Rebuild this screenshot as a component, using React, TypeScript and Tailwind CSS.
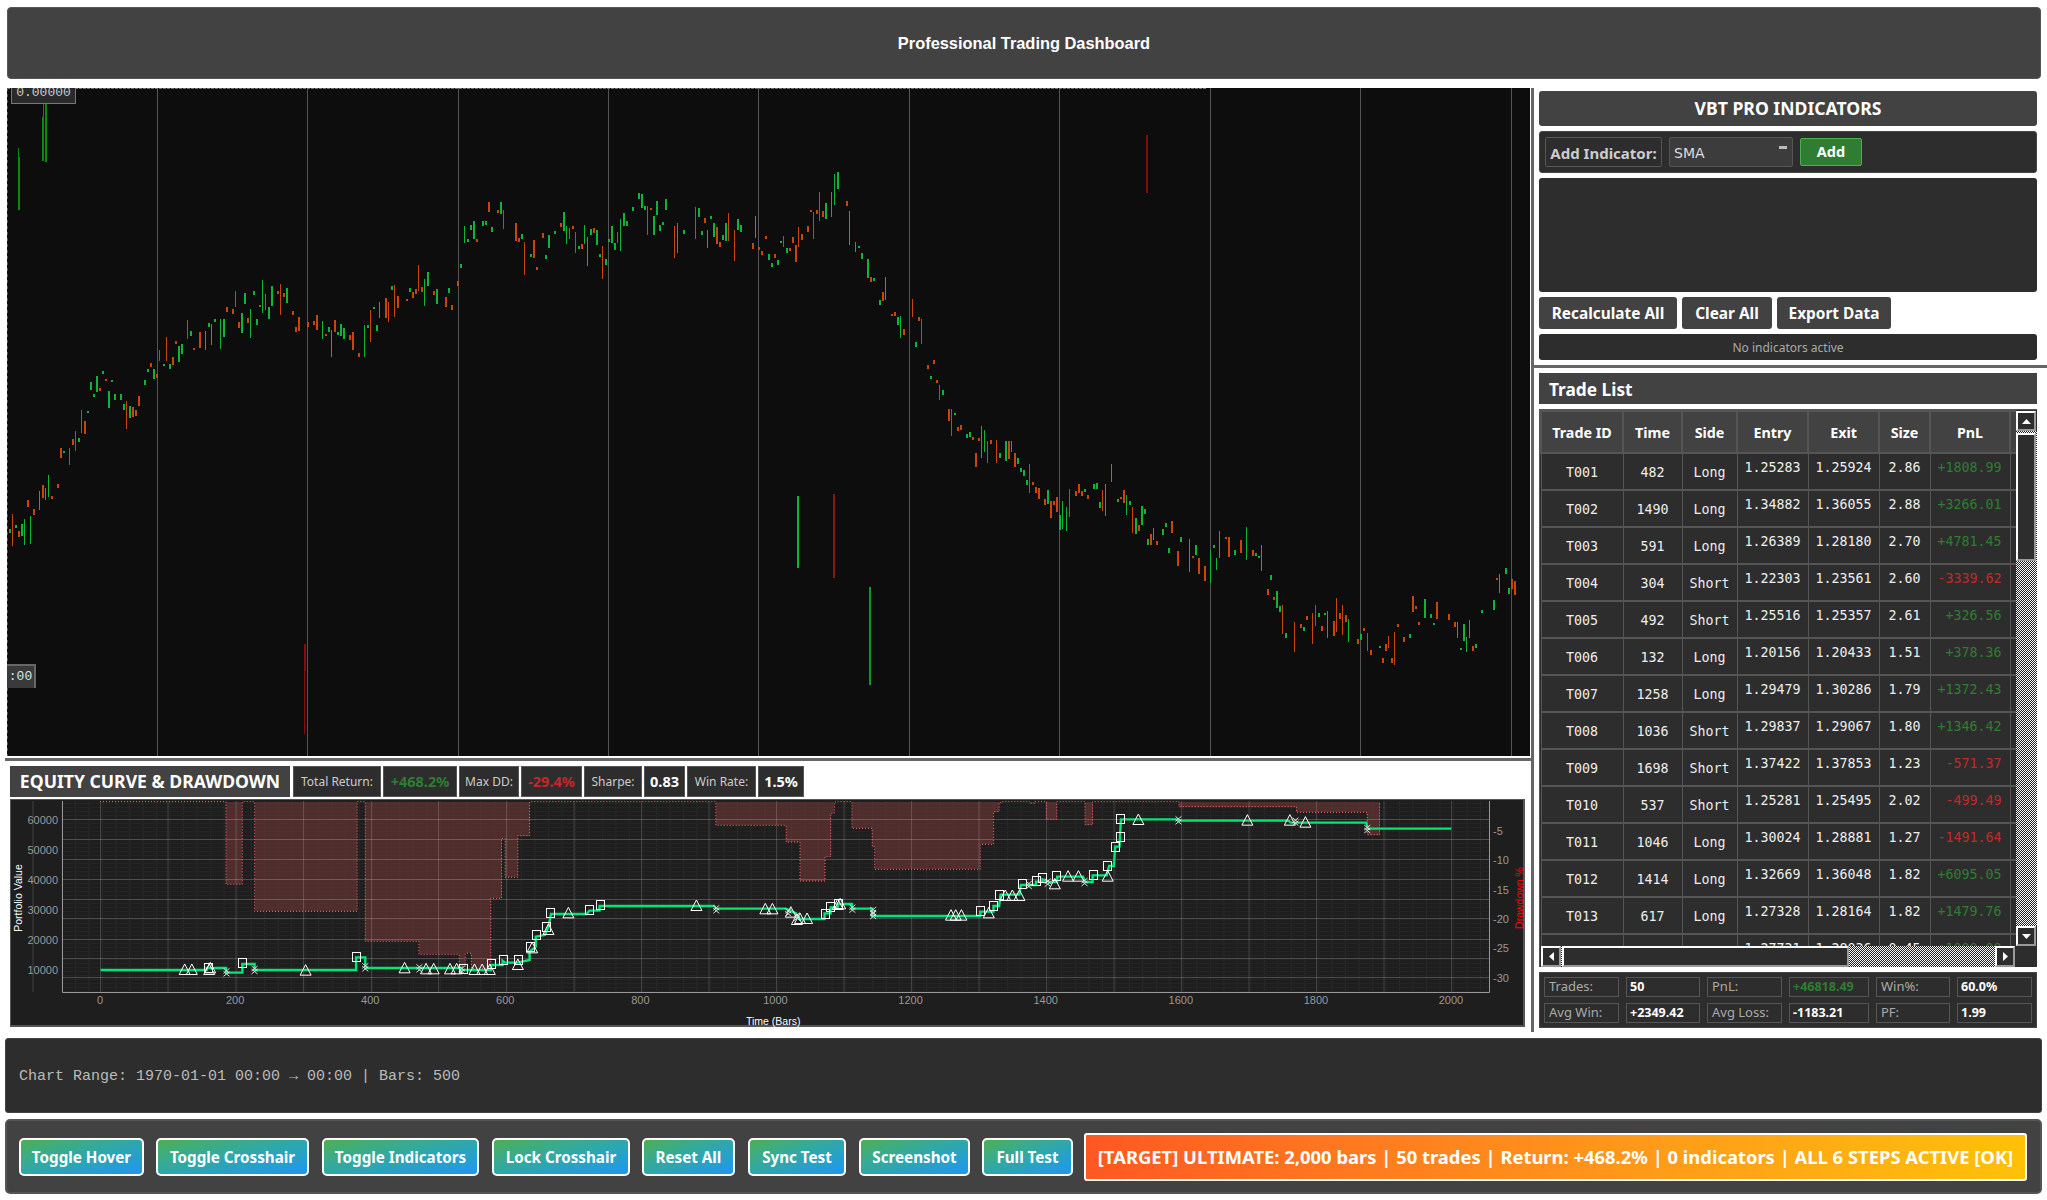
import React from 'react';

interface Trade {
  id: string;
  time: number;
  side: string;
  entry: string;
  exit: string;
  size: string;
  pnl: string;
}

const trades: Trade[] = [
  { id: 'T001', time: 482, side: 'Long', entry: '1.25283', exit: '1.25924', size: '2.86', pnl: '+1808.99' },
  { id: 'T002', time: 1490, side: 'Long', entry: '1.34882', exit: '1.36055', size: '2.88', pnl: '+3266.01' },
  { id: 'T003', time: 591, side: 'Long', entry: '1.26389', exit: '1.28180', size: '2.70', pnl: '+4781.45' },
  { id: 'T004', time: 304, side: 'Short', entry: '1.22303', exit: '1.23561', size: '2.60', pnl: '-3339.62' },
  { id: 'T005', time: 492, side: 'Short', entry: '1.25516', exit: '1.25357', size: '2.61', pnl: '+326.56' },
  { id: 'T006', time: 132, side: 'Long', entry: '1.20156', exit: '1.20433', size: '1.51', pnl: '+378.36' },
  { id: 'T007', time: 1258, side: 'Long', entry: '1.29479', exit: '1.30286', size: '1.79', pnl: '+1372.43' },
  { id: 'T008', time: 1036, side: 'Short', entry: '1.29837', exit: '1.29067', size: '1.80', pnl: '+1346.42' },
  { id: 'T009', time: 1698, side: 'Short', entry: '1.37422', exit: '1.37853', size: '1.23', pnl: '-571.37' },
  { id: 'T010', time: 537, side: 'Short', entry: '1.25281', exit: '1.25495', size: '2.02', pnl: '-499.49' },
  { id: 'T011', time: 1046, side: 'Long', entry: '1.30024', exit: '1.28881', size: '1.27', pnl: '-1491.64' },
  { id: 'T012', time: 1414, side: 'Long', entry: '1.32669', exit: '1.36048', size: '1.82', pnl: '+6095.05' },
  { id: 'T013', time: 617, side: 'Long', entry: '1.27328', exit: '1.28164', size: '1.82', pnl: '+1479.76' },
  { id: 'T014', time: 1122, side: 'Long', entry: '1.27731', exit: '1.28036', size: '0.45', pnl: '+1000.00' },
];

// price path of the candle chart, in page pixels
const pricePath: [number, number][] = [
  [9, 515], [30, 520], [52, 483], [78, 431], [98, 372], [130, 405], [163, 360], [209, 326], [277, 294], [307, 330],
  [355, 342], [405, 285], [454, 295], [467, 233], [496, 215], [535, 255], [561, 222], [607, 248], [640, 203], [679, 228],
  [731, 228], [783, 255], [835, 186], [849, 222], [868, 281], [920, 333], [940, 392], [972, 450], [1005, 457], [1038, 483],
  [1051, 516], [1110, 483], [1149, 529], [1208, 561], [1253, 535], [1286, 627], [1332, 620], [1384, 653], [1423, 600], [1469, 646],
  [1501, 581], [1514, 600],
];

function priceAt(x: number) {
  for (let i = 1; i < pricePath.length; i++) {
    const [x0, y0] = pricePath[i - 1];
    const [x1, y1] = pricePath[i];
    if (x <= x1) return y0 + ((y1 - y0) * (x - x0)) / (x1 - x0);
  }
  return pricePath[pricePath.length - 1][1];
}

function makeCandles() {
  let seed = 90817;
  const rnd = () => {
    seed = (seed * 1664525 + 1013904223) % 4294967296;
    return seed / 4294967296;
  };
  const out: { x: number; y: number; w: number; h: number; c: string }[] = [];
  for (let x = 9; x < 1515; x += 3.01) {
    const kind = rnd();
    const c = rnd() > 0.5 ? '#0ab53a' : '#c9450a';
    const y = priceAt(x) + (rnd() - 0.5) * 30;
    if (kind < 0.2) continue;
    if (kind < 0.62) out.push({ x, y, w: 2, h: 2 + rnd() * 4, c });
    else if (kind < 0.82) out.push({ x, y: y - 6, w: 2, h: 6 + rnd() * 14, c });
    else out.push({ x, y: y - 12, w: 1, h: 10 + rnd() * 24, c });
  }
  return out;
}

const candles = makeCandles();
const chartGrid = [157.5, 307.5, 458.5, 608.5, 758.5, 909.5, 1059.5, 1210.5, 1360.5, 1511.5];

// zoomed reference coordinates -> page pixels for the equity plot
const ax = (x: number) => x / 1.96;
const bx = (x: number) => 800 + x / 2.119;
const py = (y: number) => 750 + y / 3;

const equityA = [[197, 660], [405, 660], [405, 654], [443, 654], [443, 668], [475, 668], [475, 642], [499, 642], [499, 660], [698, 660], [698, 622], [716, 622], [716, 654], [905, 654], [905, 660], [962, 660], [962, 645], [985, 645], [985, 632], [990, 638], [1015, 638], [1038, 630], [1038, 605], [1050, 590], [1050, 560], [1068, 555], [1075, 530], [1080, 492], [1150, 492], [1155, 482], [1175, 482], [1175, 468], [1400, 468], [1403, 476], [1540, 476], [1560, 490], [1568, 507]];
const equityB = [[52, 507], [52, 490], [65, 490], [65, 472], [80, 472], [80, 462], [110, 462], [110, 476], [153, 476], [153, 498], [382, 498], [382, 485], [410, 485], [410, 468], [422, 468], [425, 434], [465, 434], [468, 405], [500, 405], [500, 395], [514, 395], [514, 388], [528, 396], [545, 396], [545, 380], [600, 380], [604, 396], [620, 396], [620, 376], [650, 376], [655, 348], [665, 348], [668, 290], [677, 290], [680, 208], [800, 208], [803, 212], [1035, 212], [1040, 218], [1200, 218], [1203, 236], [1380, 236]];
const equityPts = [...equityA.map(([x, y]) => `${ax(x)},${py(y)}`), ...equityB.map(([x, y]) => `${bx(x)},${py(y)}`)].join(' ');

// drawdown steps: [from, to, bottom]
const ddA = [[443, 475, 403], [499, 700, 484], [716, 821, 574], [821, 900, 613], [900, 912, 650], [912, 924, 610], [924, 962, 655], [962, 983, 445], [983, 990, 265], [990, 1015, 382], [1015, 1038, 257], [1403, 1541, 226], [1541, 1568, 276]];
const ddB = [[0, 53, 393], [53, 65, 320], [65, 73, 190], [73, 80, 156], [110, 153, 235], [153, 158, 290], [158, 382, 358], [382, 410, 283], [410, 422, 185], [422, 427, 158], [487, 497, 160], [522, 544, 208], [604, 620, 224], [803, 1052, 170], [1052, 1202, 187], [1202, 1228, 254]];
const ddSteps = [...ddA.map(([a, b, c]) => [ax(a), ax(b), py(c)]), ...ddB.map(([a, b, c]) => [bx(a), bx(b), py(c)])];

function ddOutline() {
  const top = py(155);
  let d = `M100 ${top}`;
  ddSteps.forEach(([a, b, c], i) => {
    const prev = ddSteps[i - 1];
    const next = ddSteps[i + 1];
    d += prev && prev[1] === a ? ` L${a} ${c}` : ` L${a} ${top} L${a} ${c}`;
    d += ` L${b} ${c}`;
    if (!next || next[0] !== b) d += ` L${b} ${top}`;
  });
  return d;
}

const triangles = [
  ...[[362, 660], [376, 660], [410, 660], [412, 655], [599, 662], [793, 655], [835, 658], [850, 658], [882, 658], [895, 658], [930, 660], [945, 660], [960, 660], [1015, 645], [1043, 595], [1075, 540], [1114, 490], [1365, 468], [1500, 478], [1514, 478], [1550, 488], [1562, 510]].map(([x, y]) => [ax(x), py(y)]),
  ...[[0, 507], [15, 507], [80, 465], [85, 463], [320, 497], [330, 497], [342, 497], [400, 490], [435, 438], [450, 438], [465, 438], [540, 403], [568, 380], [590, 380], [652, 380], [717, 210], [948, 212], [1038, 212], [1071, 218]].map(([x, y]) => [bx(x), py(y)]),
];
const squares = [
  ...[[408, 655], [475, 640], [698, 622], [908, 658], [963, 643], [985, 630], [1015, 630], [1038, 590], [1050, 555], [1070, 530], [1078, 490], [1155, 480], [1176, 466]].map(([x, y]) => [ax(x), py(y)]),
  ...[[54, 493], [64, 471], [80, 462], [382, 484], [410, 469], [422, 436], [470, 403], [501, 394], [513, 385], [543, 379], [621, 376], [651, 349], [667, 292], [679, 262], [679, 208]].map(([x, y]) => [bx(x), py(y)]),
];
const crosses = [
  ...[[444, 667], [499, 660], [716, 652], [822, 655], [905, 660], [1404, 478], [1545, 487], [1562, 500]].map(([x, y]) => [ax(x), py(y)]),
  ...[[111, 476], [155, 483], [155, 495], [485, 405], [525, 398], [603, 396], [802, 211], [1050, 215], [1202, 237]].map(([x, y]) => [bx(x), py(y)]),
];

const majorX = [32.5, 100, 167.5, 235.5, 303, 371, 438, 506, 573.5, 641, 708.5, 776, 843.5, 911, 978.5, 1046, 1113.5, 1181, 1248.5, 1316, 1383.5, 1451];
const majorY = [819, 839, 859, 879, 899, 918, 939, 958, 977];
const leftTicks: [string, number][] = [['60000', 820], ['50000', 850], ['40000', 880], ['30000', 910], ['20000', 940], ['10000', 970]];
const rightTicks: [string, number][] = [['-5', 831], ['-10', 860], ['-15', 890], ['-20', 919], ['-25', 948], ['-30', 978]];
const bottomTicks = [0, 200, 400, 600, 800, 1000, 1200, 1400, 1600, 1800, 2000];

function range(from: number, to: number, step: number) {
  const out: number[] = [];
  for (let v = from; v <= to; v += step) out.push(v);
  return out;
}

function CandleChart() {
  return (
    <div className="relative w-[1523px] h-[668px] ml-[2px] bg-[#0d0d0d] overflow-hidden">
      <svg width="1523" height="668" viewBox="7 88 1523 668" className="block">
        {chartGrid.map((x) => (
          <line key={x} x1={x} x2={x} y1="88" y2="756" stroke="#555" />
        ))}
        <line x1="7" x2="1207" y1="88.5" y2="88.5" stroke="#777" strokeDasharray="3 1" />
        <line x1="7.5" x2="7.5" y1="88" y2="756" stroke="#555" strokeDasharray="3 3" />
        {candles.map((c, i) => (
          <rect key={i} x={Math.round(c.x)} y={Math.round(c.y)} width={c.w} height={Math.round(c.h)} fill={c.c} shapeRendering="crispEdges" />
        ))}
        <rect x="18" y="148" width="1" height="10" fill="#0a8a0a" />
        <rect x="18" y="157" width="2" height="53" fill="#0a8a0a" />
        <rect x="43" y="104" width="1" height="14" fill="#0a8a0a" />
        <rect x="42" y="117" width="2" height="44" fill="#0a8a0a" />
        <rect x="45" y="104" width="2" height="58" fill="#0a8a0a" />
        <rect x="304" y="644" width="2" height="27" fill="#8a0a0a" />
        <rect x="304" y="671" width="1" height="63" fill="#8a0a0a" />
        <rect x="1146" y="135" width="2" height="58" fill="#8a0a0a" />
        <rect x="797" y="496" width="2" height="72" fill="#0ab53a" />
        <rect x="833" y="494" width="2" height="84" fill="#8a1a0a" />
        <rect x="869" y="587" width="2" height="98" fill="#0a9a2a" />
      </svg>
      <div className="absolute left-[4px] top-0 w-[65px] h-[16px] bg-[#2a2a2a] border-b border-x border-[#777] flex items-start justify-center font-['Liberation_Mono',monospace] text-[13px] leading-[10px] text-[#ccc]">
        0.00000
      </div>
      <div className="absolute left-0 top-[576px] w-[29px] h-[24px] bg-[#3a3a3a] border-t-2 border-r-2 border-[#666] flex items-center justify-center font-['Liberation_Mono',monospace] text-[13px] text-[#d5e6f5]">
        :00
      </div>
    </div>
  );
}

function EquityPlot() {
  const mono = "'Liberation Sans', sans-serif";
  return (
    <div className="w-[1515px] h-[228px] mt-[2px] ml-[5px] bg-[#1e1e1e] border-b-2 border-r-2 border-[#555]">
      <svg width="1515" height="228" viewBox="10 799 1515 228" className="block">
        {range(62, 1489, 13.51).map((x) => (
          <line key={x} x1={x} x2={x} y1="801" y2="992" stroke="#292929" />
        ))}
        {range(803, 992, 4).map((y) => (
          <line key={y} x1="62" x2="1489" y1={y + 0.5} y2={y + 0.5} stroke="#242424" />
        ))}
        {ddSteps.map(([a, b, c], i) => (
          <rect key={i} x={a} y="801.5" width={b - a} height={c - 801.5} fill="#7a3a3a" fillOpacity="0.55" shapeRendering="crispEdges" />
        ))}
        {majorX.map((x) => (
          <line key={x} x1={x + 0.5} x2={x + 0.5} y1="801" y2="992" stroke="#fff" strokeOpacity="0.16" />
        ))}
        {majorY.map((y) => (
          <line key={y} x1="62" x2="1489" y1={y + 0.5} y2={y + 0.5} stroke="#fff" strokeOpacity="0.2" />
        ))}
        <path d={ddOutline()} fill="none" stroke="#ff6b6b" strokeDasharray="1 2" />
        <line x1="10" x2="1525" y1="799.5" y2="799.5" stroke="#555" />
        <line x1="10.5" x2="10.5" y1="799" y2="1027" stroke="#555" />
        <polyline points="62.5,801 62.5,992.5 1489.5,992.5 1489.5,801" fill="none" stroke="#999" />
        <polyline points={equityPts} fill="none" stroke="#00e676" strokeWidth="2.4" />
        {triangles.map(([x, y], i) => (
          <polygon key={i} points={`${x - 5.5},${y + 4.5} ${x + 5.5},${y + 4.5} ${x},${y - 6}`} fill="none" stroke="#fff" />
        ))}
        {squares.map(([x, y], i) => (
          <rect key={i} x={Math.round(x) - 3.5} y={Math.round(y) - 4.5} width="8" height="9" fill="none" stroke="#fff" />
        ))}
        {crosses.map(([x, y], i) => (
          <path key={i} d={`M${x - 3} ${y - 4} L${x + 3} ${y + 1} M${x + 3} ${y - 4} L${x - 3} ${y + 1} M${x - 3} ${y - 1} L${x + 3} ${y + 4} M${x + 3} ${y - 1} L${x - 3} ${y + 4}`} fill="none" stroke="#ddd" />
        ))}
        <g fontFamily={mono} fontSize="11" fill="#999">
          {leftTicks.map(([t, y]) => (
            <text key={t} x="58" y={y + 4} textAnchor="end">{t}</text>
          ))}
          {rightTicks.map(([t, y]) => (
            <text key={t} x="1493" y={y + 4}>{t}</text>
          ))}
          {bottomTicks.map((t) => (
            <text key={t} x={100 + t * 0.6755} y="1004" textAnchor="middle">{t}</text>
          ))}
        </g>
        <text x="746" y="1025" fontFamily={mono} fontSize="10.5" fill="#fff" textAnchor="start">Time (Bars)</text>
        <text transform="translate(22 898) rotate(-90)" fontFamily={mono} fontSize="10.5" fill="#fff" textAnchor="middle">Portfolio Value</text>
        <text transform="translate(1523 898) rotate(-90)" fontFamily={mono} fontSize="10.5" fill="#f00" textAnchor="middle">Drawdown %</text>
      </svg>
    </div>
  );
}

const metricClass = 'h-[31px] bg-[#2d2d2d] border border-[#555] flex items-center justify-center';

function EquityHeader() {
  return (
    <div className="flex gap-[2px] h-[31px] mt-[5px] ml-[5px]">
      <div className="w-[280px] h-[31px] mr-[1px] bg-[#424242] flex items-center justify-center text-[17.6px] font-bold text-white whitespace-nowrap">EQUITY CURVE &amp; DRAWDOWN</div>
      <div className={`${metricClass} w-[88px] text-[12px] text-[#ccc]`}>Total Return:</div>
      <div className={`${metricClass} w-[74px] text-[14.5px] font-bold text-[#2e7d32]`}>+468.2%</div>
      <div className={`${metricClass} w-[60px] text-[12px] text-[#ccc]`}>Max DD:</div>
      <div className={`${metricClass} w-[61px] text-[14.5px] font-bold text-[#c62828]`}>-29.4%</div>
      <div className={`${metricClass} w-[58px] text-[12px] text-[#ccc]`}>Sharpe:</div>
      <div className={`${metricClass} w-[41px] text-[14.5px] font-bold text-white`}>0.83</div>
      <div className={`${metricClass} w-[69px] text-[12px] text-[#ccc]`}>Win Rate:</div>
      <div className={`${metricClass} w-[46px] text-[14.5px] font-bold text-white`}>1.5%</div>
    </div>
  );
}

const scrollBtn = 'flex items-center justify-center bg-[#2d2d2d] border-2 border-t-white border-l-white border-r-[#999] border-b-[#999]';
const hatch = 'bg-[repeating-conic-gradient(#fff_0_25%,#222_0_50%)] bg-[length:2px_2px]';

function TradeTable() {
  return (
    <div className="flex flex-col w-[498px] h-[558px] bg-[#2d2d2d] border-t border-l border-[#555]">
      <div className="flex h-[536px]">
        <div className="w-[476px] overflow-hidden">
          <table className="table-fixed border-collapse w-[476px] font-['DejaVu_Sans_Mono',monospace] text-[13.3px] text-[#eee]">
            <colgroup>
              <col className="w-[82px]" />
              <col className="w-[59px]" />
              <col className="w-[55px]" />
              <col className="w-[71px]" />
              <col className="w-[71px]" />
              <col className="w-[51px]" />
              <col className="w-[80px]" />
              <col className="w-[7px]" />
            </colgroup>
            <thead>
              <tr className="h-[42px] bg-[#424242] font-['Noto_Sans',sans-serif] text-[14.3px] font-bold text-white">
                {['Trade ID', 'Time', 'Side', 'Entry', 'Exit', 'Size', 'PnL', ''].map((h, i) => (
                  <th key={i} className="border-2 border-[#555] font-bold pt-[2px]">{h}</th>
                ))}
              </tr>
            </thead>
            <tbody>
              {trades.map((t) => (
                <tr key={t.id} className="h-[37px]">
                  <td className="border-x border-y-2 border-[#555] text-center pt-[2px]">{t.id}</td>
                  <td className="border-x border-y-2 border-[#555] text-center pt-[2px]">{t.time}</td>
                  <td className="border-x border-y-2 border-[#555] text-center pt-[2px]">{t.side}</td>
                  <td className="border-x border-y-2 border-[#555] text-center pb-[8px]">{t.entry}</td>
                  <td className="border-x border-y-2 border-[#555] text-center pb-[8px]">{t.exit}</td>
                  <td className="border-x border-y-2 border-[#555] text-center pb-[8px]">{t.size}</td>
                  <td className={`border-x border-y-2 border-[#555] text-right pr-[8px] pb-[8px] ${t.pnl.startsWith('+') ? 'text-[#2e7d32]' : 'text-[#c62828]'}`}>{t.pnl}</td>
                  <td className="border-x border-y-2 border-[#555]" />
                </tr>
              ))}
            </tbody>
          </table>
        </div>
        <div className="w-[21px] flex flex-col">
          <div className={`${scrollBtn} w-[20px] h-[20px] mt-px`}>
            <svg width="9" height="5" viewBox="0 0 9 5"><polygon points="0,5 9,5 4.5,0" fill="#fff" /></svg>
          </div>
          <div className={`w-[21px] flex-1 flex flex-col ${hatch}`}>
            <div className="w-[20px] h-[128px] mt-[2px] bg-[#2d2d2d] border-2 border-t-white border-l-white border-r-[#999] border-b-[#999]" />
          </div>
          <div className={`${scrollBtn} w-[20px] h-[20px]`}>
            <svg width="9" height="5" viewBox="0 0 9 5"><polygon points="0,0 9,0 4.5,5" fill="#fff" /></svg>
          </div>
        </div>
      </div>
      <div className="flex h-[21px] pl-px">
        <div className={`${scrollBtn} w-[20px] h-[21px]`}>
          <svg width="5" height="9" viewBox="0 0 5 9"><polygon points="5,0 5,9 0,4.5" fill="#fff" /></svg>
        </div>
        <div className={`w-[434px] h-[21px] ${hatch}`}>
          <div className="w-[287px] h-[21px] ml-[1px] bg-[#2d2d2d] border-2 border-t-white border-l-white border-r-[#999] border-b-[#999]" />
        </div>
        <div className={`${scrollBtn} w-[20px] h-[21px]`}>
          <svg width="5" height="9" viewBox="0 0 5 9"><polygon points="0,0 0,9 5,4.5" fill="#fff" /></svg>
        </div>
      </div>
    </div>
  );
}

const statLabel = 'border border-[#555] px-[4px] flex items-center text-[#aaa]';
const statValue = 'border border-[#555] px-[3px] flex items-center font-bold text-[12.5px]';

function TradeStats() {
  return (
    <div className="w-[498px] h-[56px] bg-[#2d2d2d] border border-[#444] pl-[4px] pt-[4px] grid grid-cols-[75px_74px_75px_80px_74px_75px] grid-rows-[20px_20px] gap-x-[7px] gap-y-[6px] text-[13px]">
      <div className={statLabel}>Trades:</div>
      <div className={`${statValue} text-white`}>50</div>
      <div className={statLabel}>PnL:</div>
      <div className={`${statValue} text-[#2e7d32]`}>+46818.49</div>
      <div className={statLabel}>Win%:</div>
      <div className={`${statValue} text-white`}>60.0%</div>
      <div className={statLabel}>Avg Win:</div>
      <div className={`${statValue} text-white`}>+2349.42</div>
      <div className={statLabel}>Avg Loss:</div>
      <div className={`${statValue} text-white`}>-1183.21</div>
      <div className={statLabel}>PF:</div>
      <div className={`${statValue} text-white`}>1.99</div>
    </div>
  );
}

function RightPanel() {
  return (
    <div className="w-[513px] flex flex-col">
      <div className="flex flex-col gap-[5px] pl-[5px] pt-[3px] w-[503px]">
        <div className="h-[35px] bg-[#424242] rounded-[3px] flex items-center justify-center text-[17.6px] font-bold text-white">VBT PRO INDICATORS</div>
        <div className="h-[42px] bg-[#2d2d2d] border border-[#444] rounded-[3px] flex items-center pl-[5px]">
          <div className="w-[117px] h-[30px] pt-[2px] border border-[#555] rounded-[2px] flex items-center justify-center text-[15px] font-bold text-[#ccc] whitespace-nowrap">Add Indicator:</div>
          <div className="w-[124px] h-[30px] ml-[7px] bg-[#3c3c3c] border border-[#555] rounded-[2px] flex justify-between pl-[4px] pr-[5px] text-[14px] leading-[30px] text-[#ddd] font-['DejaVu_Sans',sans-serif]">
            SMA
            <span className="w-[8px] h-[3px] mt-[8px] bg-[#bbb]" />
          </div>
          <div className="w-[62px] h-[28px] ml-[7px] bg-[#2e7d32] border border-[#4caf50] rounded-[2px] flex items-center justify-center text-[14.5px] font-bold text-white">Add</div>
        </div>
        <div className="h-[114px] bg-[#2d2d2d] rounded-[3px]" />
        <div className="h-[32px] flex gap-[5px] text-[15.4px] font-bold text-white">
          <div className="w-[138px] pt-[2px] bg-[#424242] rounded-[3px] flex items-center justify-center whitespace-nowrap">Recalculate All</div>
          <div className="w-[90px] pt-[2px] bg-[#424242] rounded-[3px] flex items-center justify-center whitespace-nowrap">Clear All</div>
          <div className="w-[114px] pt-[2px] bg-[#424242] rounded-[3px] flex items-center justify-center whitespace-nowrap">Export Data</div>
        </div>
        <div className="h-[26px] pt-px bg-[#2d2d2d] rounded-[3px] flex items-center justify-center text-[12px] text-[#aaa]">No indicators active</div>
      </div>
      <div className="h-[3px] mt-[5px] bg-[#666]" />
      <div className="flex flex-col gap-[5px] pl-[5px] pt-[5px]">
        <div className="w-[498px] h-[31px] pt-[2px] bg-[#424242] flex items-center pl-[10px] text-[17.3px] font-bold text-white">Trade List</div>
        <TradeTable />
        <TradeStats />
      </div>
    </div>
  );
}

const ctrlBtn = 'h-[38px] pt-[2px] shrink-0 rounded-[5px] border-2 border-white bg-linear-to-br from-[#4caf50] to-[#2196f3] flex items-center justify-center text-[15.2px] font-bold text-white whitespace-nowrap';

export default function App() {
  return (
    <div className="w-[2047px] h-[1200px] bg-white overflow-hidden font-['Noto_Sans',sans-serif] pt-[7px]">
      <div className="h-[72px] w-[2034px] ml-[7px] bg-[#424242] border border-[#555] rounded-[4px] flex items-center justify-center font-['Liberation_Sans',sans-serif] text-[16.4px] font-bold text-white">
        Professional Trading Dashboard
      </div>
      <div className="flex h-[944px] ml-[5px] mt-[9px]">
        <div className="w-[1526px] flex flex-col">
          <CandleChart />
          <div className="h-[3px] mt-[2px] bg-[#666]" />
          <EquityHeader />
          <EquityPlot />
        </div>
        <div className="w-[3px] bg-[#666]" />
        <RightPanel />
      </div>
      <div className="w-[2037px] h-[75px] mt-[6px] ml-[5px] pt-[4px] bg-[#2d2d2d] border border-[#444] rounded-[3px] flex items-center pl-[13px] font-['Liberation_Mono',monospace] text-[15px] text-[#bbb]">
        Chart Range: 1970-01-01 00:00 → 00:00 | Bars: 500
      </div>
      <div className="w-[2037px] h-[75px] mt-[6px] ml-[5px] bg-[#424242] border-2 border-[#555] rounded-[5px] flex items-center pl-[12px]">
        <div className={`${ctrlBtn} w-[125px]`}>Toggle Hover</div>
        <div className={`${ctrlBtn} w-[153px] ml-[12px]`}>Toggle Crosshair</div>
        <div className={`${ctrlBtn} w-[157px] ml-[13px]`}>Toggle Indicators</div>
        <div className={`${ctrlBtn} w-[138px] ml-[13px]`}>Lock Crosshair</div>
        <div className={`${ctrlBtn} w-[93px] ml-[12px]`}>Reset All</div>
        <div className={`${ctrlBtn} w-[98px] ml-[13px]`}>Sync Test</div>
        <div className={`${ctrlBtn} w-[111px] ml-[13px]`}>Screenshot</div>
        <div className={`${ctrlBtn} w-[91px] ml-[12px]`}>Full Test</div>
        <div className="w-[943px] h-[48px] ml-[11px] shrink-0 rounded-[3px] border-2 border-white bg-linear-to-r from-[#ff5722] to-[#ffc107] flex items-center justify-center text-[18.4px] font-bold text-white whitespace-nowrap">
          [TARGET] ULTIMATE: 2,000 bars | 50 trades | Return: +468.2% | 0 indicators | ALL 6 STEPS ACTIVE [OK]
        </div>
      </div>
    </div>
  );
}
